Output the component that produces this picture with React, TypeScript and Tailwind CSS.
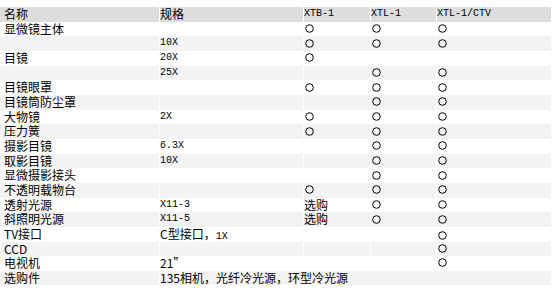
import type { ReactNode } from "react";

type Mark = "o" | "" | "选购";

type Row = {
  name: string;
  spec?: ReactNode;
  marks?: [Mark, Mark, Mark];
  span?: ReactNode;
};

// SimSun-style half-width latin: 6px advance
function Lat({ children }: { children: ReactNode }) {
  return (
    <span className="inline-block align-top leading-[14.67px] font-['Liberation_Mono',monospace] text-[10px]">
      {children}
    </span>
  );
}

const rows: Row[] = [
  { name: "显微镜主体", marks: ["o", "o", "o"] },
  { name: "", spec: <Lat>10X</Lat>, marks: ["o", "o", "o"] },
  { name: "目镜", spec: <Lat>20X</Lat>, marks: ["o", "", ""] },
  { name: "", spec: <Lat>25X</Lat>, marks: ["", "o", "o"] },
  { name: "目镜眼罩", marks: ["o", "o", "o"] },
  { name: "目镜筒防尘罩", marks: ["", "o", "o"] },
  { name: "大物镜", spec: <Lat>2X</Lat>, marks: ["o", "o", "o"] },
  { name: "压力簧", marks: ["o", "o", "o"] },
  { name: "摄影目镜", spec: <Lat>6.3X</Lat>, marks: ["", "o", "o"] },
  { name: "取影目镜", spec: <Lat>10X</Lat>, marks: ["", "o", "o"] },
  { name: "显微摄影接头", marks: ["", "o", "o"] },
  { name: "不透明载物台", marks: ["o", "o", "o"] },
  { name: "透射光源", spec: <Lat>X11-3</Lat>, marks: ["选购", "o", "o"] },
  { name: "斜照明光源", spec: <Lat>X11-5</Lat>, marks: ["选购", "o", "o"] },
  {
    name: "TV接口",
    spec: (
      <>
        C型接口，<span className="font-['Liberation_Mono',monospace] text-[10px]">1X</span>
      </>
    ),
    marks: ["", "", "o"],
  },
  { name: "CCD", marks: ["", "", "o"] },
  { name: "电视机", spec: "21”", marks: ["", "", "o"] },
  { name: "选购件", span: "135相机，光纤冷光源，环型冷光源" },
];

function Circle() {
  return (
    <svg width="9" height="9" viewBox="0 0 9 9" className="ml-px -mt-px">
      <circle cx="4.5" cy="4.5" r="3.8" fill="none" stroke="#000" strokeWidth="1" />
    </svg>
  );
}

function MarkCell({ mark, bg }: { mark: Mark; bg: string }) {
  return (
    <div className={`flex items-center ${bg}`}>
      {mark === "o" ? <Circle /> : mark}
    </div>
  );
}

const cols = "grid grid-cols-[159px_143px_66px_65px_114px] gap-x-px h-[14.67px] leading-[14.67px]";

export default function App() {
  return (
    <div className="bg-white pt-[7px] w-[557px] h-[292px] font-['Noto_Sans_CJK_SC',sans-serif] text-[12px] text-black">
      <div className="w-[551px] flex flex-col">
        <div className={cols}>
          <div className="bg-[#dddddd] pl-[4px]">名称</div>
          <div className="bg-[#dddddd]">规格</div>
          <div className="bg-[#dddddd]"><Lat>XTB-1</Lat></div>
          <div className="bg-[#dddddd]"><Lat>XTL-1</Lat></div>
          <div className="bg-[#dddddd]"><Lat>XTL-1/CTV</Lat></div>
        </div>
        {rows.map((r, i) => {
          const bg = i % 2 === 1 ? "bg-[#f3f3f3]" : "bg-white";
          if (r.span) {
            return (
              <div
                key={i}
                className="grid grid-cols-[159px_1fr] gap-x-px h-[14.67px] leading-[14.67px]"
              >
                <div className={`${bg} pl-[4px]`}>{r.name}</div>
                <div className={bg}>{r.span}</div>
              </div>
            );
          }
          const m = r.marks ?? ["", "", ""];
          return (
            <div key={i} className={cols}>
              <div className={`${bg} pl-[4px]`}>{r.name}</div>
              <div className={bg}>{r.spec}</div>
              <MarkCell mark={m[0]} bg={bg} />
              <MarkCell mark={m[1]} bg={bg} />
              <MarkCell mark={m[2]} bg={bg} />
            </div>
          );
        })}
      </div>
    </div>
  );
}
